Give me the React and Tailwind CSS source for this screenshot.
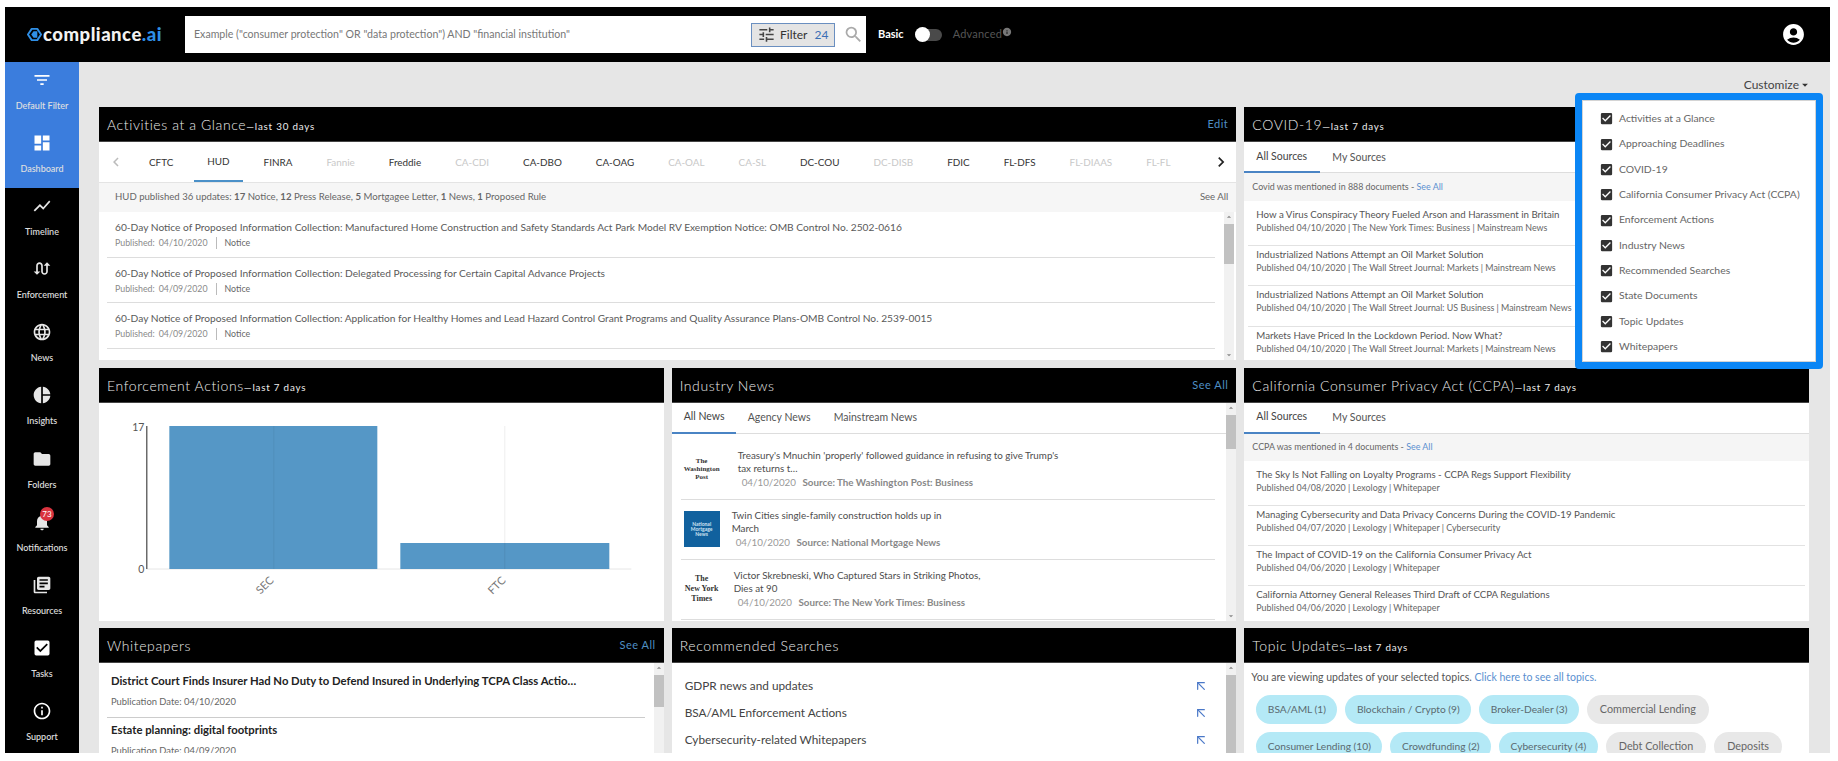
import React from "react";
import {
  MdFilterList, MdDashboard, MdShowChart, MdSwapCalls, MdLanguage, MdPieChart, MdFolder,
  MdNotifications, MdLibraryBooks, MdCheckBox, MdInfoOutline, MdAccountCircle, MdTune, MdSearch,
  MdChevronLeft, MdChevronRight, MdInfo, MdArrowDropDown, MdArrowDropUp,
} from "react-icons/md";
import { ArrowUpLeft } from "lucide-react";

const side = [
  ["Default Filter", MdFilterList, true],
  ["Dashboard", MdDashboard, true],
  ["Timeline", MdShowChart],
  ["Enforcement", MdSwapCalls],
  ["News", MdLanguage],
  ["Insights", MdPieChart],
  ["Folders", MdFolder],
  ["Notifications", MdNotifications],
  ["Resources", MdLibraryBooks],
  ["Tasks", MdCheckBox],
  ["Support", MdInfoOutline],
];

const agencies = [
  ["CFTC", 1], ["HUD", 2], ["FINRA", 1], ["Fannie", 0], ["Freddie", 3], ["CA-CDI", 0], ["CA-DBO", 1], ["CA-OAG", 1],
  ["CA-OAL", 0], ["CA-SL", 0], ["DC-COU", 3], ["DC-DISB", 0], ["FDIC", 3], ["FL-DFS", 1], ["FL-DIAAS", 0], ["FL-FL", 0], ["FL-OFR", 0],
];

const activity = [
  ["60-Day Notice of Proposed Information Collection: Manufactured Home Construction and Safety Standards Act Park Model RV Exemption Notice: OMB Control No. 2502-0616", "04/10/2020"],
  ["60-Day Notice of Proposed Information Collection: Delegated Processing for Certain Capital Advance Projects", "04/09/2020"],
  ["60-Day Notice of Proposed Information Collection: Application for Healthy Homes and Lead Hazard Control Grant Programs and Quality Assurance Plans-OMB Control No. 2539-0015", "04/09/2020"],
  ["60-Day Notice of Proposed Information Collection: Application for Public Housing Programs and Neighborhood Initiatives Grant Reporting Requirements", "04/09/2020"],
];

const covid = [
  ["How a Virus Conspiracy Theory Fueled Arson and Harassment in Britain", "Published 04/10/2020 | The New York Times: Business | Mainstream News"],
  ["Industrialized Nations Attempt an Oil Market Solution", "Published 04/10/2020 | The Wall Street Journal: Markets | Mainstream News"],
  ["Industrialized Nations Attempt an Oil Market Solution", "Published 04/10/2020 | The Wall Street Journal: US Business | Mainstream News"],
  ["Markets Have Priced In the Lockdown Period. Now What?", "Published 04/10/2020 | The Wall Street Journal: Markets | Mainstream News"],
];

const ccpa = [
  ["The Sky Is Not Falling on Loyalty Programs - CCPA Regs Support Flexibility", "Published 04/08/2020 | Lexology | Whitepaper"],
  ["Managing Cybersecurity and Data Privacy Concerns During the COVID-19 Pandemic", "Published 04/07/2020 | Lexology | Whitepaper | Cybersecurity"],
  ["The Impact of COVID-19 on the California Consumer Privacy Act", "Published 04/06/2020 | Lexology | Whitepaper"],
  ["California Attorney General Releases Third Draft of CCPA Regulations", "Published 04/06/2020 | Lexology | Whitepaper"],
];

const customize = [
  "Activities at a Glance", "Approaching Deadlines", "COVID-19", "California Consumer Privacy Act (CCPA)", "Enforcement Actions",
  "Industry News", "Recommended Searches", "State Documents", "Topic Updates", "Whitepapers",
];

const chips1 = [["BSA/AML (1)", 1], ["Blockchain / Crypto (9)", 1], ["Broker-Dealer (3)", 1], ["Commercial Lending", 0]];
const chips2 = [["Consumer Lending (10)", 1], ["Crowdfunding (2)", 1], ["Cybersecurity (4)", 1], ["Debt Collection", 0], ["Deposits", 0]];

function Panel({ title, sub, action, children }) {
  return (
    <section className="flex flex-col bg-white h-[253px] overflow-hidden min-w-0">
      <header className="h-[35px] shrink-0 bg-black border-b border-[#444] flex items-center justify-between pl-2 pr-2 pt-[1px]">
        <div className="flex items-baseline text-[#ececec] whitespace-nowrap">
          <span className="text-[14px] tracking-[0.6px] font-light">{title}</span>
          {sub && <span className="text-[9.8px] tracking-[0.8px]">—{sub}</span>}
        </div>
        {action && <span className="text-[11px] tracking-[0.5px] text-[#4f8fc4]">{action}</span>}
      </header>
      {children}
    </section>
  );
}

function Scroll({ top, height }) {
  return (
    <div className="w-[10px] shrink-0 bg-[#f1f1f1] flex flex-col items-center relative">
      <MdArrowDropUp className="text-[#888] text-[10px] h-[10px] shrink-0" />
      <div className="w-full bg-[#c1c1c1]" style={{ marginTop: top, height }} />
      <div className="flex-1" />
      <MdArrowDropDown className="text-[#888] text-[10px] h-[10px] shrink-0" />
    </div>
  );
}

function Tabs({ items }) {
  return (
    <div className="h-[31px] shrink-0 flex border-b border-[#ddd] text-[10.5px] text-[#555] whitespace-nowrap">
      {items.map(([t, w, a]) => (
        <div key={t} style={{ width: w }} className={`flex items-center pl-[12px] h-[31px] ${a ? "border-b-2 border-[#4a84c4] text-[#444]" : ""}`}>
          {t}
        </div>
      ))}
    </div>
  );
}

function DocList({ rows }) {
  return (
    <div className="flex-1 overflow-hidden px-1 pt-[5px]">
      {rows.map(([t, m], i) => (
        <div key={t + i} className={`h-[40.2px] pl-2 pt-[1px] ${i < rows.length - 1 ? "border-b border-[#e2e2e2]" : ""}`}>
          <div className="text-[9.7px] leading-[15px] text-[#555] whitespace-nowrap">{t}</div>
          <div className="text-[8.9px] leading-[12px] text-[#666] whitespace-nowrap">{m}</div>
        </div>
      ))}
    </div>
  );
}

function NewsItem({ logo, gap, lines, meta, border }) {
  return (
    <div className={`h-[60px] flex items-center ${border ? "border-b border-[#ddd]" : ""} pl-[3px]`}>
      <div className="w-[36px] shrink-0 flex justify-center">{logo}</div>
      <div style={{ marginLeft: gap }}>
        <div className="text-[9.8px] leading-[13px] text-[#4d4d4d] whitespace-nowrap">
          {lines[0]}<br />{lines[1]}
        </div>
        <div className="text-[9.8px] leading-[14px] ml-1 text-[#999] whitespace-nowrap">
          {meta[0]} <span className="ml-1 font-bold text-[#888]">{meta[1]}</span>
        </div>
      </div>
    </div>
  );
}

function Chip({ label, on }) {
  return (
    <span className={`h-[29px] rounded-full flex items-center whitespace-nowrap ${on ? "px-[11.5px] text-[10.2px] text-[#5a6a70] bg-[#b4e9f6]" : "px-[13px] text-[10.8px] text-[#666] bg-[#e8e8e8]"}`}>
      {label}
    </span>
  );
}

function Chart() {
  return (
    <svg viewBox="0 0 564 218" className="w-full h-[218px] block">
      <line x1="47" y1="166" x2="532" y2="166" stroke="#e6e6e6" />
      <line x1="47.5" y1="23" x2="47.5" y2="166" stroke="#222" />
      <rect x="70" y="23" width="208" height="143" fill="#5597c6" />
      <rect x="301" y="140" width="209" height="26" fill="#5597c6" />
      <line x1="174.5" y1="23" x2="174.5" y2="166" stroke="#000" strokeOpacity="0.06" />
      <line x1="405.5" y1="23" x2="405.5" y2="166" stroke="#000" strokeOpacity="0.07" />
      <text x="45" y="28" textAnchor="end" fontSize="10.5" fill="#555">17</text>
      <text x="45" y="170" textAnchor="end" fontSize="10.5" fill="#555">0</text>
      <text x="175" y="178" textAnchor="end" fontSize="11" fill="#777" transform="rotate(-45 175 178)">SEC</text>
      <text x="407" y="178" textAnchor="end" fontSize="11" fill="#777" transform="rotate(-45 407 178)">FTC</text>
    </svg>
  );
}

export default function App() {
  return (
    <div className="w-[1838px] h-[761px] bg-white pl-[5px] pr-[8px] pt-[7px] pb-[8px] overflow-hidden relative [font-family:'Lato',sans-serif]">
      <div className="h-full flex flex-col">
        {/* top bar */}
        <div className="h-[55px] shrink-0 bg-black flex items-center relative">
          <div className="w-[180px] shrink-0 flex items-center pl-[22px] gap-[1px]">
            <svg viewBox="0 0 16 16" className="w-[15px] h-[15px] shrink-0">
              <path d="M5 2 H11 L15 8 L11 14 H5 L1 8 Z" fill="none" stroke="#2f8fe6" strokeWidth="2" strokeLinejoin="round" />
              <path d="M11 4.5 V11.5 H7 L4.5 8 L7 4.5 Z" fill="#2f8fe6" />
            </svg>
            <span className="text-[18.5px] font-black tracking-[0.5px] text-[#f2f2f2] leading-none">
              compliance<span className="text-[#2f8fe6]">.ai</span>
            </span>
          </div>
          <div className="w-[681px] h-[37px] bg-white flex items-center pl-[9px] pr-[2px]">
            <span className="flex-1 text-[10.6px] text-[#777] whitespace-nowrap">Example ("consumer protection" OR "data protection") AND "financial institution"</span>
            <div className="w-[84px] h-[24px] bg-[#e4e4e4] border border-[#6a8fc0] flex items-center pl-[5px] gap-[4px] text-[12px] text-[#333]">
              <MdTune className="text-[19px] text-[#444]" />
              <span>Filter</span>
              <span className="text-[#3b6fb5] text-[12px] ml-[3px]">24</span>
            </div>
            <MdSearch className="text-[21px] text-[#aaa] ml-[8px]" />
          </div>
          <span className="ml-3 text-[11px] font-bold text-white">Basic</span>
          <div className="ml-[11px] w-[27px] h-[12px] bg-[#4a4a4a] rounded-full relative flex items-center">
            <div className="absolute left-0 w-[15px] h-[15px] rounded-full bg-white" />
          </div>
          <span className="ml-[11px] text-[11px] tracking-[0.2px] text-[#555]">Advanced</span>
          <MdInfo className="text-[10px] text-[#777] mb-[5px]" />
          <MdAccountCircle className="absolute right-[24px] text-[25px] text-white" />
        </div>
        <div className="flex-1 flex min-h-0">
          {/* side nav */}
          <nav className="w-[74px] shrink-0 bg-black flex flex-col">
            {side.map(([label, Icon, on]) => (
              <div key={label} className={`h-[63.1px] shrink-0 flex flex-col items-center pt-[8px] ${on ? "bg-[#3b7ddd]" : ""}`}>
                <div className="relative">
                  <Icon className={`text-[20px] ${on || label === "Support" || label === "Tasks" ? "text-white" : "text-[#e6e6e6]"}`} />
                  {label === "Notifications" && (
                    <span className="absolute left-[8px] -top-[5px] w-[14px] h-[14px] rounded-full bg-[#d9333f] text-white text-[8px] flex items-center justify-center">73</span>
                  )}
                </div>
                <span className="mt-[9px] text-[9px] leading-[13px] font-medium text-[#e0e0e0] whitespace-nowrap">{label}</span>
              </div>
            ))}
          </nav>
          {/* main */}
          <main className="flex-1 bg-[#e6e6e6] pl-[20px] pr-[21px] overflow-hidden min-w-0">
            <div className="h-[45px] flex items-center justify-end">
              <span className="text-[12px] text-[#444] pr-[1px]">Customize</span>
              <MdArrowDropDown className="text-[#333] text-[14px] -ml-[2px] -mr-[3px]" />
            </div>
            <div className="grid grid-cols-3 gap-x-2 gap-y-[7.5px]">
              <div className="col-span-2 min-w-0">
                <Panel title="Activities at a Glance" sub="last 30 days" action="Edit">
                  <div className="h-[41px] shrink-0 flex items-center border-b border-[#e4e4e4] pl-[8px]">
                    <MdChevronLeft className="text-[#bbb] text-[18px] shrink-0" />
                    <div className="flex-1 flex h-full overflow-hidden gap-[8px] pl-[11px] min-w-0">
                      {agencies.map(([a, s]) => (
                        <div key={a} className={`px-[13px] h-full shrink-0 flex items-center text-[9.9px] ${s === 0 ? "text-[#c8c8c8]" : "text-[#333]"} ${s === 2 ? "border-b-2 border-[#4a90c8]" : ""}`}>{a}</div>
                      ))}
                    </div>
                    <MdChevronRight className="text-[#222] text-[20px] shrink-0 ml-[8px] mr-[5px]" />
                  </div>
                  <div className="h-[29px] shrink-0 bg-[#f6f6f6] flex items-center justify-between px-[16px] pr-2 text-[9.6px] text-[#666] whitespace-nowrap">
                    <span>HUD published 36 updates: <b>17</b> Notice, <b>12</b> Press Release, <b>5</b> Mortgagee Letter, <b>1</b> News, <b>1</b> Proposed Rule</span>
                    <span>See All</span>
                  </div>
                  <div className="flex-1 flex min-h-0">
                    <div className="flex-1 min-w-0 overflow-hidden pl-2 pr-[9px]">
                      {activity.map(([t, d]) => (
                        <div key={t} className="h-[45.6px] border-b border-[#ddd] pl-2 pt-[7px]">
                          <div className="text-[10.2px] leading-[16px] text-[#5a5a5a] whitespace-nowrap">{t}</div>
                          <div className="text-[8.8px] leading-[14px] mt-[1px] text-[#8a8a8a] flex items-center whitespace-nowrap">
                            Published: <span className="ml-1">{d}</span>
                            <span className="mx-[8px] h-[12px] w-px bg-[#bbb]" />
                            <span className="text-[#666]">Notice</span>
                          </div>
                        </div>
                      ))}
                    </div>
                    <Scroll top={2} height={40} />
                    <div className="w-[2px] bg-white" />
                  </div>
                </Panel>
              </div>
              <Panel title="COVID-19" sub="last 7 days">
                <Tabs items={[["All Sources", 76, true], ["My Sources", 70]]} />
                <div className="h-[28px] shrink-0 bg-[#f5f5f5] flex items-center px-2 text-[8.9px] text-[#666]">
                  Covid was mentioned in 888 documents -&nbsp;<span className="text-[#5a8fd0]">See All</span>
                </div>
                <DocList rows={covid} />
              </Panel>

              <Panel title="Enforcement Actions" sub="last 7 days">
                <Chart />
              </Panel>
              <Panel title="Industry News" action="See All">
                <div className="flex-1 flex min-h-0">
                  <div className="flex-1 min-w-0 flex flex-col overflow-hidden">
                    <Tabs items={[["All News", 64, true], ["Agency News", 86], ["Mainstream News", 110]]} />
                    <div className="px-[9px] pt-[6px] pr-[11px]">
                      <NewsItem border gap={"18px"} lines={["Treasury's Mnuchin 'properly' followed guidance in refusing to give Trump's", "tax returns t…"]} meta={["04/10/2020", "Source: The Washington Post: Business"]}
                        logo={<div className="text-[7px] leading-[8px] font-bold text-center [font-family:'Liberation_Serif',serif] text-[#333]">The<br />Washington<br />Post</div>} />
                      <NewsItem border gap={"12px"} lines={["Twin Cities single-family construction holds up in", "March"]} meta={["04/10/2020", "Source: National Mortgage News"]}
                        logo={<div className="w-[36px] h-[36px] bg-[#11619e] text-[#cfe3f2] text-[5px] leading-[5px] font-bold flex items-center justify-center text-center">National<br />Mortgage<br />News</div>} />
                      <NewsItem border gap={"14px"} lines={["Victor Skrebneski, Who Captured Stars in Striking Photos,", "Dies at 90"]} meta={["04/10/2020", "Source: The New York Times: Business"]}
                        logo={<div className="text-[8px] leading-[10px] font-bold text-center [font-family:'Liberation_Serif',serif] text-[#333]">The<br />New York<br />Times</div>} />
                    </div>
                  </div>
                  <Scroll top={2} height={34} />
                </div>
              </Panel>
              <Panel title="California Consumer Privacy Act (CCPA)" sub="last 7 days">
                <Tabs items={[["All Sources", 76, true], ["My Sources", 70]]} />
                <div className="h-[27px] shrink-0 bg-[#f5f5f5] flex items-center px-2 text-[8.9px] text-[#666]">
                  CCPA was mentioned in 4 documents -&nbsp;<span className="text-[#5a8fd0]">See All</span>
                </div>
                <DocList rows={ccpa} />
              </Panel>

              <Panel title="Whitepapers" action="See All">
                <div className="flex-1 flex min-h-0">
                  <div className="flex-1 min-w-0 overflow-hidden pl-[8px] pr-[9px] pt-[9px]">
                    <div className="border-b border-[#ccc] h-[46px] pl-1">
                      <div className="text-[11.3px] leading-[18px] font-bold text-[#222] whitespace-nowrap">District Court Finds Insurer Had No Duty to Defend Insured in Underlying TCPA Class Actio…</div>
                      <div className="text-[9.4px] leading-[15px] mt-[4px] text-[#666]">Publication Date: 04/10/2020</div>
                    </div>
                    <div className="pl-1 pt-[3px]">
                      <div className="text-[11.3px] leading-[18px] font-bold text-[#222]">Estate planning: digital footprints</div>
                      <div className="text-[9.4px] leading-[15px] mt-[4px] text-[#666]">Publication Date: 04/09/2020</div>
                    </div>
                  </div>
                  <Scroll top={2} height={32} />
                </div>
              </Panel>
              <Panel title="Recommended Searches">
                <div className="flex-1 flex min-h-0">
                  <div className="flex-1 min-w-0 pl-[13px] pr-[17px] pt-[9px] overflow-hidden">
                    {["GDPR news and updates", "BSA/AML Enforcement Actions", "Cybersecurity-related Whitepapers"].map((t) => (
                      <div key={t} className="h-[27.3px] flex items-center justify-between text-[11.8px] text-[#444] whitespace-nowrap">
                        <span>{t}</span>
                        <ArrowUpLeft className="w-[16px] h-[16px] text-[#4a78c8]" strokeWidth={1.8} />
                      </div>
                    ))}
                  </div>
                  <Scroll top={2} height={90} />
                </div>
              </Panel>
              <Panel title="Topic Updates" sub="last 7 days">
                <div className="px-[7px] pt-[6px] text-[10.5px] leading-[16px] text-[#555] whitespace-nowrap">
                  You are viewing updates of your selected topics. <span className="text-[#5a8fd0]">Click here to see all topics.</span>
                </div>
                <div className="flex gap-2 pl-3 pt-[10px]">
                  {chips1.map(([l, o]) => <Chip key={l} label={l} on={o} />)}
                </div>
                <div className="flex gap-2 pl-3 pt-[8px]">
                  {chips2.map(([l, o]) => <Chip key={l} label={l} on={o} />)}
                </div>
              </Panel>
            </div>
          </main>
        </div>
      </div>

      {/* customise dropdown */}
      <div className="absolute left-[1575px] top-[93px] w-[248px] h-[276px] bg-white border-[7px] border-[#0b86f5] rounded-[4px] pt-[6px] pl-[17px] shadow-[inset_0_0_0_1px_#d4d4d4]">
        {customize.map((c) => (
          <div key={c} className="h-[25.35px] flex items-center gap-[5px] text-[10.4px] text-[#666] whitespace-nowrap">
            <MdCheckBox className="text-[15px] text-[#333] shrink-0" />
            <span>{c}</span>
          </div>
        ))}
      </div>
    </div>
  );
}
